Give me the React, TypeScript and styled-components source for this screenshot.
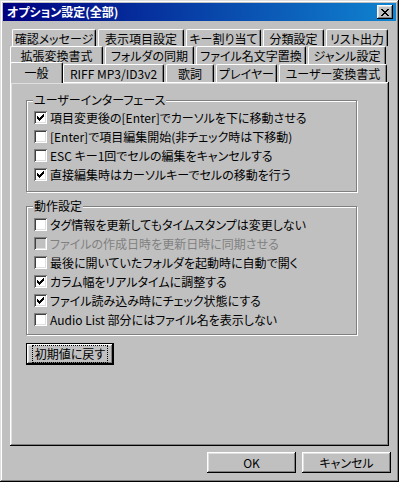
import React from "react";
import styled, { createGlobalStyle } from "styled-components";

type TabDef = { label: string; width: number; active?: boolean };
type CheckDef = { label: string; checked?: boolean; disabled?: boolean };

const GlobalStyle = createGlobalStyle`
  html, body {
    margin: 0;
    padding: 0;
    background: #c0c0c0;
  }
  body {
    font-family: "Noto Sans CJK JP", "Noto Sans", sans-serif;
    font-size: 12px;
    color: #000;
    font-feature-settings: "palt";
  }
  * {
    box-sizing: border-box;
  }
`;

const Window = styled.div`
  width: 399px;
  height: 482px;
  padding: 3px;
  display: flex;
  flex-direction: column;
  background: #c0c0c0;
  box-shadow: inset -1px -1px #000, inset 1px 1px #dfdfdf, inset -2px -2px #808080, inset 2px 2px #fff;
`;

const TitleBar = styled.div`
  height: 18px;
  flex: none;
  display: flex;
  align-items: center;
  justify-content: space-between;
  padding: 0 3px 0 4px;
  background: linear-gradient(to right, #000080, #1084d0);
  color: #fff;
  font-weight: bold;
  font-size: 12px;
  line-height: 18px;
`;

const CloseButton = styled.div`
  width: 16px;
  height: 14px;
  display: flex;
  align-items: center;
  justify-content: center;
  background: #c0c0c0;
  box-shadow: inset -1px -1px #000, inset 1px 1px #fff, inset -2px -2px #808080, inset 2px 2px #dfdfdf;
`;

const Body = styled.div`
  flex: 1;
  display: flex;
  flex-direction: column;
  padding: 8px 7px 6px 7px;
`;

const TabStrip = styled.div`
  display: flex;
  flex-direction: column;
`;

const TabRow = styled.div<{ $indent: number; $height: number }>`
  display: flex;
  gap: 2px;
  height: ${p => p.$height}px;
  padding-left: ${p => p.$indent}px;
`;

const Tab = styled.div<{ $width: number; $active?: boolean }>`
  position: relative;
  flex: none;
  width: ${p => p.$width}px;
  height: ${p => (p.$active ? "calc(100% + 3px)" : "100%")};
  margin-top: ${p => (p.$active ? "-2px" : "0")};
  margin-left: ${p => (p.$active ? "-2px" : "0")};
  margin-right: ${p => (p.$active ? "-2px" : "0")};
  z-index: ${p => (p.$active ? 2 : 0)};
  display: flex;
  justify-content: center;
  padding-top: ${p => (p.$active ? "3px" : "2px")};
  background: #c0c0c0;
  border-top: 1px solid #fff;
  border-left: 1px solid #fff;
  border-right: 1px solid #000;
  border-radius: 2px 2px 0 0;
  box-shadow: inset -1px 0 #808080;
  line-height: 14px;
  white-space: nowrap;
`;

const Panel = styled.div`
  flex: 1;
  display: flex;
  flex-direction: column;
  align-items: flex-start;
  padding: 18px 16px 0 16px;
  box-shadow: inset -1px -1px #000, inset 1px 1px #fff, inset -2px -2px #808080, inset 2px 2px #dfdfdf;
`;

const GroupBox = styled.div<{ $top: number; $bottom: number; $gap: number }>`
  position: relative;
  width: 331px;
  margin-top: ${p => p.$gap}px;
  padding: ${p => p.$top}px 0 ${p => p.$bottom}px 7px;
  border: 1px solid #808080;
  box-shadow: inset 1px 1px #fff, 1px 1px #fff;
`;

const GroupTitle = styled.span`
  position: absolute;
  top: -8px;
  left: 6px;
  padding: 0 1px;
  background: #c0c0c0;
  line-height: 14px;
`;

const CheckRow = styled.div<{ $disabled?: boolean }>`
  height: 19px;
  display: flex;
  align-items: center;
  gap: 3px;
  color: ${p => (p.$disabled ? "#808080" : "#000")};
  white-space: nowrap;
`;

const Box = styled.div<{ $disabled?: boolean }>`
  width: 13px;
  height: 13px;
  flex: none;
  padding: 3px;
  background: ${p => (p.$disabled ? "#c0c0c0" : "#fff")};
  box-shadow: inset 1px 1px #808080, inset -1px -1px #fff, inset 2px 2px #404040, inset -2px -2px #dfdfdf;
`;

const Button = styled.div<{ $width: number; $focused?: boolean }>`
  width: ${p => p.$width}px;
  height: ${p => (p.$focused ? 22 : 21)}px;
  display: flex;
  align-items: center;
  justify-content: center;
  background: #c0c0c0;
  border: ${p => (p.$focused ? "1px solid #000" : "none")};
  box-shadow: inset -1px -1px #000, inset 1px 1px #fff, inset -2px -2px #808080, inset 2px 2px #dfdfdf;
  line-height: 14px;
`;

const FocusRing = styled.span`
  padding: 1px 2px;
  border: 1px dotted #000;
`;

const ResetButton = styled(Button)`
  margin-top: 8px;
`;

const ButtonRow = styled.div`
  display: flex;
  justify-content: flex-end;
  gap: 6px;
  margin: 6px -2px 0 0;
`;

const CHECK = ["......X", ".....XX", "X...XXX", "XX.XXX.", "XXXXX..", ".XXX...", "..X...."];
const CROSS = ["XX....XX", ".XX..XX.", "..XXXX..", "...XX...", "..XXXX..", ".XX..XX.", "XX....XX"];

const PixelIcon = ({ rows, color = "#000" }: { rows: string[]; color?: string }) => (
  <svg width={rows[0].length} height={rows.length} shapeRendering="crispEdges" style={{ display: "block" }}>
    {rows.flatMap((r, y) =>
      r.split("").map((c, x) => (c === "X" ? <rect key={`${x}-${y}`} x={x} y={y} width={1} height={1} fill={color} /> : null))
    )}
  </svg>
);

const tabRows: { indent: number; height: number; tabs: TabDef[] }[] = [
  {
    indent: 2,
    height: 17,
    tabs: [
      { label: "確認メッセージ", width: 84 },
      { label: "表示項目設定", width: 86 },
      { label: "キー割り当て", width: 75 },
      { label: "分類設定", width: 61 },
      { label: "リスト出力", width: 62 },
    ],
  },
  {
    indent: 0,
    height: 18,
    tabs: [
      { label: "拡張変換書式", width: 93 },
      { label: "フォルダの同期", width: 89 },
      { label: "ファイル名文字置換", width: 110 },
      { label: "ジャンル設定", width: 78 },
    ],
  },
  {
    indent: 2,
    height: 18,
    tabs: [
      { label: "一般", width: 53, active: true },
      { label: "RIFF MP3/ID3v2", width: 101 },
      { label: "歌詞", width: 48 },
      { label: "プレイヤー", width: 61 },
      { label: "ユーザー変換書式", width: 108 },
    ],
  },
];

const uiChecks: CheckDef[] = [
  { label: "項目変更後の[Enter]でカーソルを下に移動させる", checked: true },
  { label: "[Enter]で項目編集開始(非チェック時は下移動)" },
  { label: "ESC キー1回でセルの編集をキャンセルする" },
  { label: "直接編集時はカーソルキーでセルの移動を行う", checked: true },
];

const actionChecks: CheckDef[] = [
  { label: "タグ情報を更新してもタイムスタンプは変更しない" },
  { label: "ファイルの作成日時を更新日時に同期させる", disabled: true },
  { label: "最後に開いていたフォルダを起動時に自動で開く" },
  { label: "カラム幅をリアルタイムに調整する", checked: true },
  { label: "ファイル読み込み時にチェック状態にする", checked: true },
  { label: "Audio List 部分にはファイル名を表示しない" },
];

const CheckItem = ({ label, checked, disabled }: CheckDef) => (
  <CheckRow $disabled={disabled}>
    <Box $disabled={disabled}>{checked && <PixelIcon rows={CHECK} />}</Box>
    <span>{label}</span>
  </CheckRow>
);

const App = () => (
  <Window>
    <GlobalStyle />
    <TitleBar>
      <span>オプション設定(全部)</span>
      <CloseButton>
        <PixelIcon rows={CROSS} />
      </CloseButton>
    </TitleBar>
    <Body>
      <TabStrip>
        {tabRows.map((row, i) => (
          <TabRow key={i} $indent={row.indent} $height={row.height}>
            {row.tabs.map(t => (
              <Tab key={t.label} $width={t.width} $active={t.active}>
                {t.label}
              </Tab>
            ))}
          </TabRow>
        ))}
      </TabStrip>
      <Panel>
        <GroupBox $top={7} $bottom={7} $gap={0}>
          <GroupTitle>ユーザーインターフェース</GroupTitle>
          {uiChecks.map(c => <CheckItem key={c.label} {...c} />)}
        </GroupBox>
        <GroupBox $top={8} $bottom={5} $gap={14}>
          <GroupTitle>動作設定</GroupTitle>
          {actionChecks.map(c => <CheckItem key={c.label} {...c} />)}
        </GroupBox>
        <ResetButton $width={88} $focused>
          <FocusRing>初期値に戻す</FocusRing>
        </ResetButton>
      </Panel>
      <ButtonRow>
        <Button $width={89}>OK</Button>
        <Button $width={89}>キャンセル</Button>
      </ButtonRow>
    </Body>
  </Window>
);

export default App;
